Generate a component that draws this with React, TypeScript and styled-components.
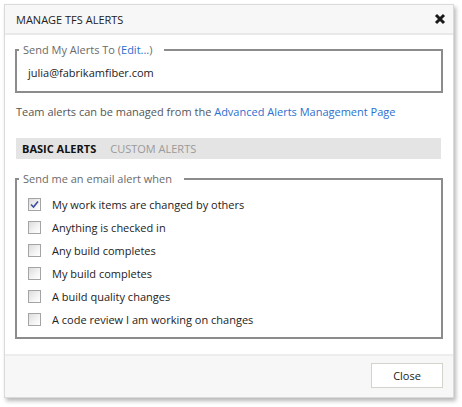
import React from "react";
import styled, { createGlobalStyle } from "styled-components";

const Global = createGlobalStyle`
  html, body { margin: 0; padding: 0; background: #ffffff; }
  body { font-family: "Open Sans", "Noto Sans", sans-serif; }
  * { box-sizing: border-box; }
`;

const Page = styled.div`
  width: 462px;
  height: 407px;
  padding: 4px 0 0 4px;
`;

const Dialog = styled.div`
  width: 450px;
  height: 394px;
  border: 1px solid #dadada;
  background: #ffffff;
  box-shadow: 2px 3px 4px rgba(0, 0, 0, 0.28);
  display: flex;
  flex-direction: column;
`;

const TitleBar = styled.div`
  height: 30px;
  flex: none;
  background: #f7f7f7;
  border-bottom: 2px solid #e9e9e9;
  display: flex;
  align-items: center;
  justify-content: space-between;
  padding: 0 7px 0 11px;
`;

const Title = styled.span`
  font-size: 11px;
  color: #222;
`;

const CloseX = styled.button`
  border: 0;
  background: none;
  padding: 0;
  width: 12px;
  height: 12px;
  display: flex;
  cursor: pointer;
`;

const Body = styled.div`
  padding: 7px 10px 0 10px;
  display: flex;
  flex-direction: column;
`;

const Fieldset = styled.fieldset<{ $pad: string }>`
  margin: 0;
  border: 2px solid #8c8c8c;
  padding: ${(p) => p.$pad};
  min-width: 0;
`;

const Legend = styled.legend`
  font-size: 11px;
  line-height: 16px;
  color: #6a6a6a;
  padding: 0 12px 0 4px;
  margin-left: -9px;
`;

const Link = styled.a`
  color: #2b6fcf;
  text-decoration: none;
`;

const Email = styled.div`
  font-size: 11px;
  line-height: 16px;
  color: #222;
`;

const Note = styled.p`
  margin: 11px 0 0 1px;
  font-size: 11px;
  line-height: 16px;
  color: #555;
`;

const Tabs = styled.div`
  margin: 18px 2px 0 1px;
  height: 21px;
  background: #e4e4e4;
  display: flex;
  align-items: center;
  padding-left: 6px;
  gap: 14px;
`;

const Tab = styled.span<{ $active?: boolean }>`
  font-size: 11px;
  font-weight: ${(p) => (p.$active ? 700 : 400)};
  color: ${(p) => (p.$active ? "#111" : "#9a9a9a")};
`;

const Spacer = styled.div`
  height: 12px;
`;

const Row = styled.label`
  display: flex;
  align-items: center;
  height: 23px;
  gap: 11px;
  font-size: 11px;
  color: #222;
`;

const Box = styled.span`
  width: 13px;
  height: 13px;
  border: 1px solid #a4a4a4;
  background: linear-gradient(135deg, #dcdcdc 0%, #f4f4f4 60%, #ffffff 100%);
  display: flex;
  align-items: center;
  justify-content: center;
`;

const Footer = styled.div`
  margin-top: auto;
  border-top: 2px solid #ededed;
  background: #f7f7f7;
  height: 43px;
  flex: none;
  display: flex;
  justify-content: flex-end;
  align-items: flex-start;
  padding: 7px 10px 0 0;
`;

const Button = styled.button`
  width: 72px;
  height: 25px;
  border: 1px solid #d3d3cc;
  background: #ffffff;
  font-family: inherit;
  font-size: 11px;
  color: #222;
  padding: 0;
`;

const items = [
  { label: "My work items are changed by others", checked: true },
  { label: "Anything is checked in", checked: false },
  { label: "Any build completes", checked: false },
  { label: "My build completes", checked: false },
  { label: "A build quality changes", checked: false },
  { label: "A code review I am working on changes", checked: false },
];

function Check({ checked }: { checked: boolean }) {
  return (
    <Box>
      {checked && (
        <svg width="9" height="9" viewBox="0 0 9 9">
          <path d="M1 4.5 L3.5 7 L8 1.5" fill="none" stroke="#3a4fa0" strokeWidth="1.6" />
        </svg>
      )}
    </Box>
  );
}

export default function App() {
  return (
    <Page>
      <Global />
      <Dialog>
        <TitleBar>
          <Title>MANAGE TFS ALERTS</Title>
          <CloseX aria-label="Close">
            <svg width="12" height="12" viewBox="0 0 12 12">
              <path d="M2 2 L10 10 M10 2 L2 10" stroke="#1a1a1a" strokeWidth="3" />
            </svg>
          </CloseX>
        </TitleBar>
        <Body>
          <Fieldset $pad="7px 11px 10px 11px">
            <Legend>
              Send My Alerts To (<Link href="#">Edit...</Link>)
            </Legend>
            <Email>julia@fabrikamfiber.com</Email>
          </Fieldset>
          <Note>
            Team alerts can be managed from the <Link href="#">Advanced Alerts Management Page</Link>
          </Note>
          <Tabs>
            <Tab $active>BASIC ALERTS</Tab>
            <Tab>CUSTOM ALERTS</Tab>
          </Tabs>
          <Spacer />
          <Fieldset $pad="6px 11px 6px 11px">
            <Legend>Send me an email alert when</Legend>
            {items.map((it) => (
              <Row key={it.label}>
                <Check checked={it.checked} />
                {it.label}
              </Row>
            ))}
          </Fieldset>
        </Body>
        <Footer>
          <Button>Close</Button>
        </Footer>
      </Dialog>
    </Page>
  );
}
